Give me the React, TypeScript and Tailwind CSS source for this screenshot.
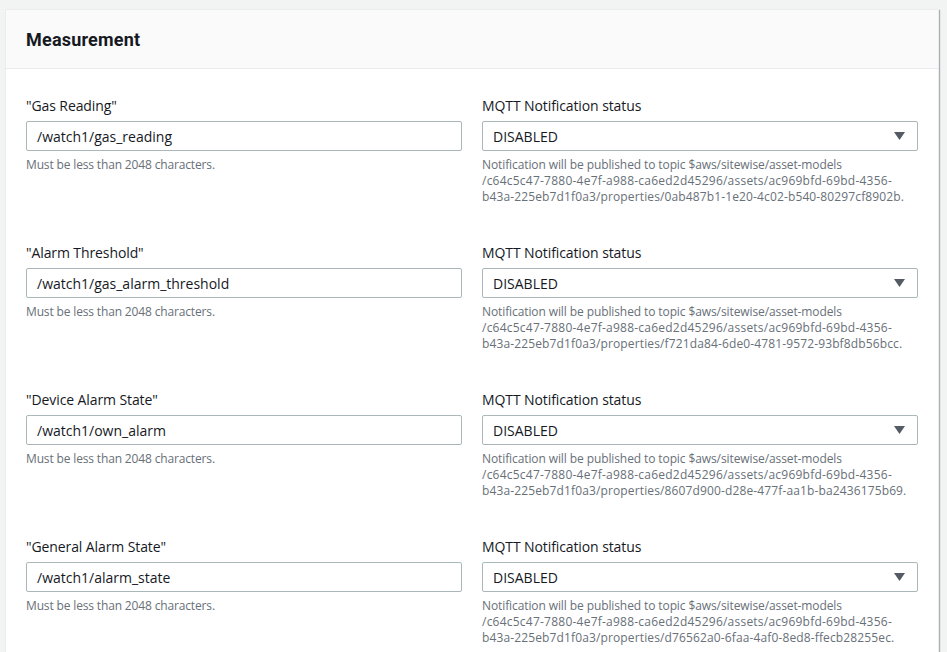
import React from "react";

type Row = { label: string; value: string; prop: string };

const rows: Row[] = [
  { label: '"Gas Reading"', value: "/watch1/gas_reading", prop: "0ab487b1-1e20-4c02-b540-80297cf8902b" },
  { label: '"Alarm Threshold"', value: "/watch1/gas_alarm_threshold", prop: "f721da84-6de0-4781-9572-93bf8db56bcc" },
  { label: '"Device Alarm State"', value: "/watch1/own_alarm", prop: "8607d900-d28e-477f-aa1b-ba2436175b69" },
  { label: '"General Alarm State"', value: "/watch1/alarm_state", prop: "d76562a0-6faa-4af0-8ed8-ffecb28255ec" },
];

function Caret() {
  return (
    <svg width="11" height="8" viewBox="0 0 11 8" className="shrink-0">
      <polygon points="0,0 11,0 5.5,8" fill="#545b64" />
    </svg>
  );
}

function FieldRow({ row }: { row: Row }) {
  return (
    <div className="grid grid-cols-2 gap-x-[20px]">
      <div className="flex flex-col">
        <label className="text-[14px] leading-[20px] tracking-[-0.1px] text-[#16191f] mb-[5px]">{row.label}</label>
        <div className="h-[30px] border border-[#aab7b8] rounded-[2px] bg-white flex items-center px-[10px] text-[14px] text-[#16191f]">
          {row.value}
        </div>
        <div className="mt-[6px] text-[12px] leading-[16px] tracking-[-0.15px] text-[#687078]">
          Must be less than 2048 characters.
        </div>
      </div>
      <div className="flex flex-col">
        <label className="text-[14px] leading-[20px] tracking-[-0.1px] text-[#16191f] mb-[5px]">MQTT Notification status</label>
        <div className="h-[30px] border border-[#aab7b8] rounded-[2px] bg-white flex items-center justify-between pl-[10px] pr-[12px] text-[14px] text-[#16191f]">
          <span>DISABLED</span>
          <Caret />
        </div>
        <div className="mt-[6px] text-[12px] leading-[16px] text-[#687078]">
          <div className="tracking-[-0.1px]">Notification will be published to topic $aws/sitewise/asset-models</div>
          <div className="tracking-[0.23px]">/c64c5c47-7880-4e7f-a988-ca6ed2d45296/assets/ac969bfd-69bd-4356-</div>
          <div className="tracking-[0.13px]">b43a-225eb7d1f0a3/properties/{row.prop}.</div>
        </div>
      </div>
    </div>
  );
}

export default function App() {
  return (
    <div className="min-h-[652px] bg-[#f2f3f3] pt-[9px] pl-[5px] font-['Open_Sans',sans-serif]">
      <div className="w-[934px] bg-white border border-[#eaeded] shadow-[1px_1px_1px_0_rgba(0,28,36,0.3)] min-h-[700px]">
        <div className="h-[59px] bg-[#fafafa] border-b border-[#eaeded] flex items-center px-[20px]">
          <h2 className="font-['Roboto',sans-serif] font-bold text-[18px] tracking-[0.2px] text-[#16191f]">Measurement</h2>
        </div>
        <div className="px-[20px] pt-[27px] flex flex-col gap-[38px]">
          {rows.map((r) => (
            <FieldRow key={r.label} row={r} />
          ))}
        </div>
      </div>
    </div>
  );
}
